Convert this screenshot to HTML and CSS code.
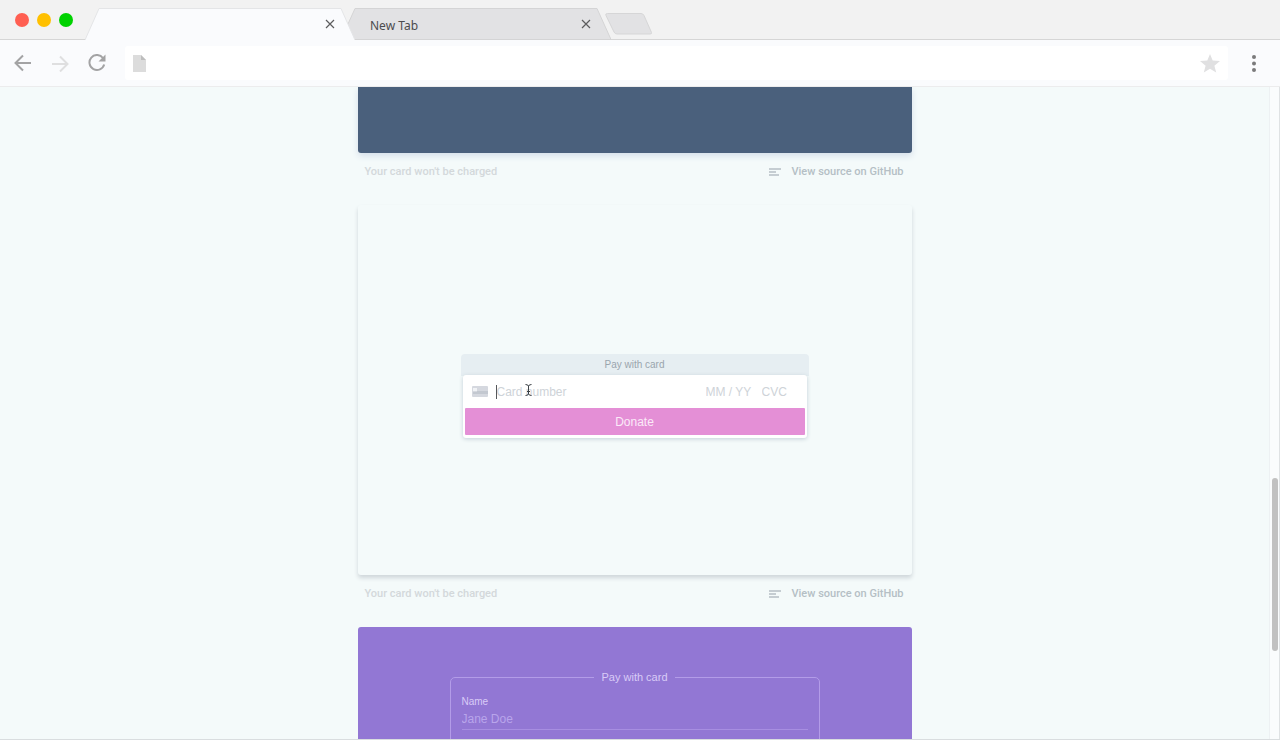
FILE: index.html
```html
<!DOCTYPE html>
<html lang="en">
<head>
    <meta charset="UTF-8">
    <meta name="viewport" content="width=device-width, initial-scale=1.0">
    <title>Pay with card</title>
    <link rel="stylesheet" href="styles.css">
</head>
<body>

    <header class="tab-bar">
        <div class="window-buttons">
            <button type="button" class="dot red" aria-label="Close window"></button>
            <button type="button" class="dot yellow" aria-label="Minimize window"></button>
            <button type="button" class="dot green" aria-label="Zoom window"></button>
        </div>

        <div class="tab active">
            <svg class="tab-shape" viewBox="0 0 270 32" preserveAspectRatio="none">
                <path d="M0 32 L14 .5 H256 L270 32" />
            </svg>
            <span class="tab-title"></span>
            <button type="button" class="tab-close" aria-label="Close tab">
                <svg width="10" height="10" viewBox="0 0 10 10"><path d="M1 1l8 8M9 1L1 9" /></svg>
            </button>
        </div>

        <div class="tab">
            <svg class="tab-shape" viewBox="0 0 270 32" preserveAspectRatio="none">
                <path d="M0 31.5 L14 .5 H256 L270 31.5 Z" />
            </svg>
            <span class="tab-title">New Tab</span>
            <button type="button" class="tab-close" aria-label="Close tab">
                <svg width="10" height="10" viewBox="0 0 10 10"><path d="M1 1l8 8M9 1L1 9" /></svg>
            </button>
        </div>

        <button type="button" class="new-tab" aria-label="New tab">
            <svg width="48" height="22" viewBox="0 0 48 22">
                <path d="M2.500.500H36Q38 .5 39 2.500L46.500 19.500Q47 21 45 21H12Q10 21 9 19L1 2.500Q0 .5 2.500.500Z" />
            </svg>
        </button>
    </header>

    <nav class="toolbar">
        <button type="button" aria-label="Back">
            <svg width="18" height="18" viewBox="0 0 18 18"><path class="line" d="M17 9H2M9 1.500L1.500 9L9 16.500" /></svg>
        </button>
        <button type="button" class="disabled" aria-label="Forward">
            <svg width="18" height="18" viewBox="0 0 18 18"><path class="line" d="M1 10H16M9 2.500L16.500 10L9 17.500" /></svg>
        </button>
        <button type="button" aria-label="Reload">
            <svg width="18" height="18" viewBox="0 0 18 18">
                <path class="line" d="M15 4A7.500 7.500 0 1 0 16.200 10.500" />
                <path class="solid" d="M17.500 .5V7.500H10.500Z" />
            </svg>
        </button>
        <div class="address">
            <svg width="13" height="17" viewBox="0 0 13 17">
                <path fill="#dcdcdc" d="M0 0H8L13 5V17H0Z" />
                <path fill="#bdbdbd" d="M8 0L13 5H8Z" />
            </svg>
            <input type="text" aria-label="Address">
            <button type="button" aria-label="Bookmark">
                <svg width="20" height="19" viewBox="0 0 20 19">
                    <path fill="#e0e0e1" d="M10 0L12.700 6.600L20 7.100L14.400 11.700L16.200 18.500L10 14.800L3.800 18.500L5.600 11.700L0 7.100L7.300 6.600Z" />
                </svg>
            </button>
        </div>
        <button type="button" class="menu" aria-label="Menu">
            <svg width="6" height="18" viewBox="0 0 6 18">
                <circle cx="3" cy="3" r="2" /><circle cx="3" cy="9.500" r="2" /><circle cx="3" cy="16" r="2" />
            </svg>
        </button>
    </nav>

    <div class="viewport">
        <main class="page">
            <section class="card blue"></section>
            <div class="caption">
                <span>Your card won't be charged</span>
                <a href="#">
                    <svg width="12" height="8" viewBox="0 0 12 8"><path d="M0 1H12M0 4H7M0 7H10" /></svg>
                    View source on GitHub
                </a>
            </div>

            <section class="card light">
                <form class="donate">
                    <h2>Pay with card</h2>
                    <div class="donate-body">
                        <div class="card-row">
                            <svg width="16" height="11" viewBox="0 0 16 11">
                                <rect width="16" height="11" rx="1" fill="#d5d8df" />
                                <rect x="1" y="2" width="4" height="3" fill="#f1f3f6" />
                                <path d="M5 5H16V8H1V6H5Z" fill="#c3c8d0" />
                            </svg>
                            <span class="caret"></span>
                            <input type="text" class="number" placeholder="Card number" aria-label="Card number">
                            <input type="text" class="expiry" placeholder="MM / YY" aria-label="Expiry date">
                            <input type="text" class="cvc" placeholder="CVC" aria-label="CVC">
                            <svg class="pointer" width="7" height="12" viewBox="0 0 7 12">
                                <path d="M.5 .5Q3.500 .5 3.500 2.500Q3.500 .5 6.500 .5M3.500 2V10M.5 11.500Q3.500 11.500 3.500 9.500Q3.500 11.500 6.500 11.500M2 7.500H5" />
                            </svg>
                        </div>
                        <button type="button" class="donate-button">Donate</button>
                    </div>
                </form>
            </section>
            <div class="caption">
                <span>Your card won't be charged</span>
                <a href="#">
                    <svg width="12" height="8" viewBox="0 0 12 8"><path d="M0 1H12M0 4H7M0 7H10" /></svg>
                    View source on GitHub
                </a>
            </div>

            <section class="card purple">
                <form>
                    <fieldset>
                        <legend>Pay with card</legend>
                        <label for="name">Name</label>
                        <input type="text" id="name" placeholder="Jane Doe">
                    </fieldset>
                </form>
            </section>
        </main>
        <div class="scrollbar"><div class="thumb"></div></div>
    </div>

</body>
</html>
```
FILE: styles.css
```css
* {
    box-sizing: border-box;
}

body {
    display: flex;
    flex-direction: column;
    height: 100vh;
    margin: 0;
    overflow: hidden;
    background-color: #f4fafa;
    border-bottom: 1px solid #d9dddf;
    font-family: "Liberation Sans", Arial, sans-serif;
}

button {
    padding: 0;
    border: none;
    background: none;
    font-family: inherit;
}

svg {
    display: block;
    flex-shrink: 0;
}

input {
    min-width: 0;
    padding: 0;
    border: none;
    outline: none;
    background: none;
    font-family: inherit;
    font-size: 12px;
}

/* tabs */
.tab-bar {
    display: flex;
    flex-shrink: 0;
    height: 40px;
    padding-top: 8px;
    background-color: #f2f2f2;
    border-bottom: 1px solid #d6d6d6;
}

.window-buttons {
    display: flex;
    gap: 8px;
    width: 85px;
    padding: 5px 0 0 15px;
}

.dot {
    width: 14px;
    height: 14px;
    border-radius: 50%;
}

.red {
    background-color: #ff5f52;
}

.yellow {
    background-color: #ffc000;
}

.green {
    background-color: #00d200;
}

.tab {
    position: relative;
    display: flex;
    align-items: center;
    width: 270px;
    height: 32px;
    margin-left: -14px;
    padding: 0 20px 0 29px;
}

.tab.active {
    z-index: 1;
    margin-left: 0;
}

.tab-shape {
    position: absolute;
    left: 0;
    top: 0;
    width: 100%;
    height: 100%;
    fill: #e2e2e4;
    stroke: #d4d4d5;
}

.active .tab-shape {
    fill: #fafbfd;
    stroke: #e4e5e7;
}

.tab-title {
    position: relative;
    flex: 1;
    padding-top: 2px;
    color: #4c4c4e;
    font-family: "Noto Sans", sans-serif;
    font-size: 12px;
}

.tab-close {
    position: relative;
    height: 10px;
    stroke: #5c5c5e;
    stroke-width: 1.2;
}

.new-tab {
    align-self: flex-start;
    margin: 5px 0 0 -6px;
    fill: #e2e2e4;
    stroke: #d6d6d7;
}

/* toolbar */
.toolbar {
    display: flex;
    flex-shrink: 0;
    align-items: center;
    gap: 19px;
    height: 47px;
    padding: 0 23px 0 14px;
    background-color: #fafbfd;
    border-bottom: 1px solid #ececed;
}

.line {
    fill: none;
    stroke: #a3a3a4;
    stroke-width: 2;
}

.solid {
    fill: #a3a3a4;
}

.disabled .line {
    stroke: #dfdfe0;
}

.menu {
    margin-left: 4px;
    fill: #7a7a7b;
}

.address {
    display: flex;
    flex: 1;
    align-items: center;
    height: 34px;
    padding: 0 8px;
    background-color: #fff;
    border-radius: 3px;
}

.address input {
    flex: 1;
}

/* page */
.viewport {
    display: flex;
    flex: 1;
    min-height: 0;
}

.page {
    flex: 1;
    overflow: hidden;
}

.scrollbar {
    display: flex;
    flex-direction: column;
    justify-content: flex-end;
    width: 11px;
    padding: 0 1px 88px 2px;
    background-color: #fafcfd;
    border-left: 1px solid #edf1f3;
    border-right: 1px solid #dfe2e4;
}

.thumb {
    height: 173px;
    background-color: #c1c1c1;
    border-radius: 3px;
}

.card {
    display: flex;
    justify-content: center;
    width: 554px;
    max-width: 100%;
    margin: 0 auto;
    border-radius: 3px;
}

.card.blue {
    height: 66px;
    background-color: #4a607c;
    border-radius: 0 0 3px 3px;
    box-shadow: 0 3px 6px #d5dfea;
}

.card.light {
    align-items: center;
    height: 370px;
    padding-top: 12px;
    box-shadow: 0 3px 4px #cfd6da;
}

.card.purple {
    height: 370px;
    padding-top: 43px;
    background-color: #9277d4;
}

.caption {
    display: flex;
    justify-content: space-between;
    width: 554px;
    max-width: 100%;
    height: 52px;
    margin: 0 auto;
    padding: 12px 8px 0 7px;
    color: #d3d8db;
    font-family: Roboto, sans-serif;
    font-size: 11px;
    font-weight: 500;
    line-height: 14px;
}

.caption a {
    display: flex;
    align-items: center;
    gap: 10px;
    height: 14px;
    color: #b5bfc5;
    text-decoration: none;
}

.caption svg {
    stroke: #b5bfc5;
    stroke-width: 1.5;
}

/* donate form */
.donate {
    width: 348px;
    padding: 0 2px;
    background: linear-gradient(#e6eef2, #e6eef2) no-repeat 0 0 / 100% 22px;
    border-radius: 4px;
}

.donate h2 {
    margin: 0;
    color: #9aa5ad;
    font-size: 10px;
    font-weight: normal;
    line-height: 21px;
    text-align: center;
}

.donate-body {
    padding: 0 2px 3px;
    background-color: #fff;
    border-radius: 3px;
    box-shadow: 0 1px 4px #c3cfd7;
}

.card-row {
    position: relative;
    display: flex;
    align-items: center;
    height: 33px;
    padding: 0 18px 0 7px;
}

.card-row input::placeholder {
    color: #ced3d8;
}

.caret {
    width: 1px;
    height: 14px;
    margin-left: 8px;
    background-color: #55585c;
}

.number {
    flex: 1;
}

.expiry {
    width: 56px;
}

.cvc {
    width: 25px;
}

.pointer {
    position: absolute;
    left: 60px;
    top: 9px;
    fill: none;
    stroke: #3c4146;
}

.donate-button {
    display: block;
    width: 100%;
    height: 27px;
    background-color: #e48fd6;
    border-radius: 1px;
    color: #fbeaf8;
    font-size: 12px;
}

/* name form */
.purple form {
    width: 370px;
}

fieldset {
    height: 300px;
    margin: 0;
    padding: 12px 11px;
    border: 1px solid #b39ce8;
    border-radius: 5px;
}

legend {
    margin: 0 auto;
    padding: 0 7px;
    color: #d9cbf7;
    font-size: 11px;
    line-height: 14px;
}

.purple label {
    display: block;
    color: #d9cbf7;
    font-size: 10px;
    line-height: 12px;
}

.purple input {
    width: 100%;
    height: 22px;
    border-bottom: 1px solid #a78ee1;
}

.purple input::placeholder {
    color: #b9a5eb;
}
```
